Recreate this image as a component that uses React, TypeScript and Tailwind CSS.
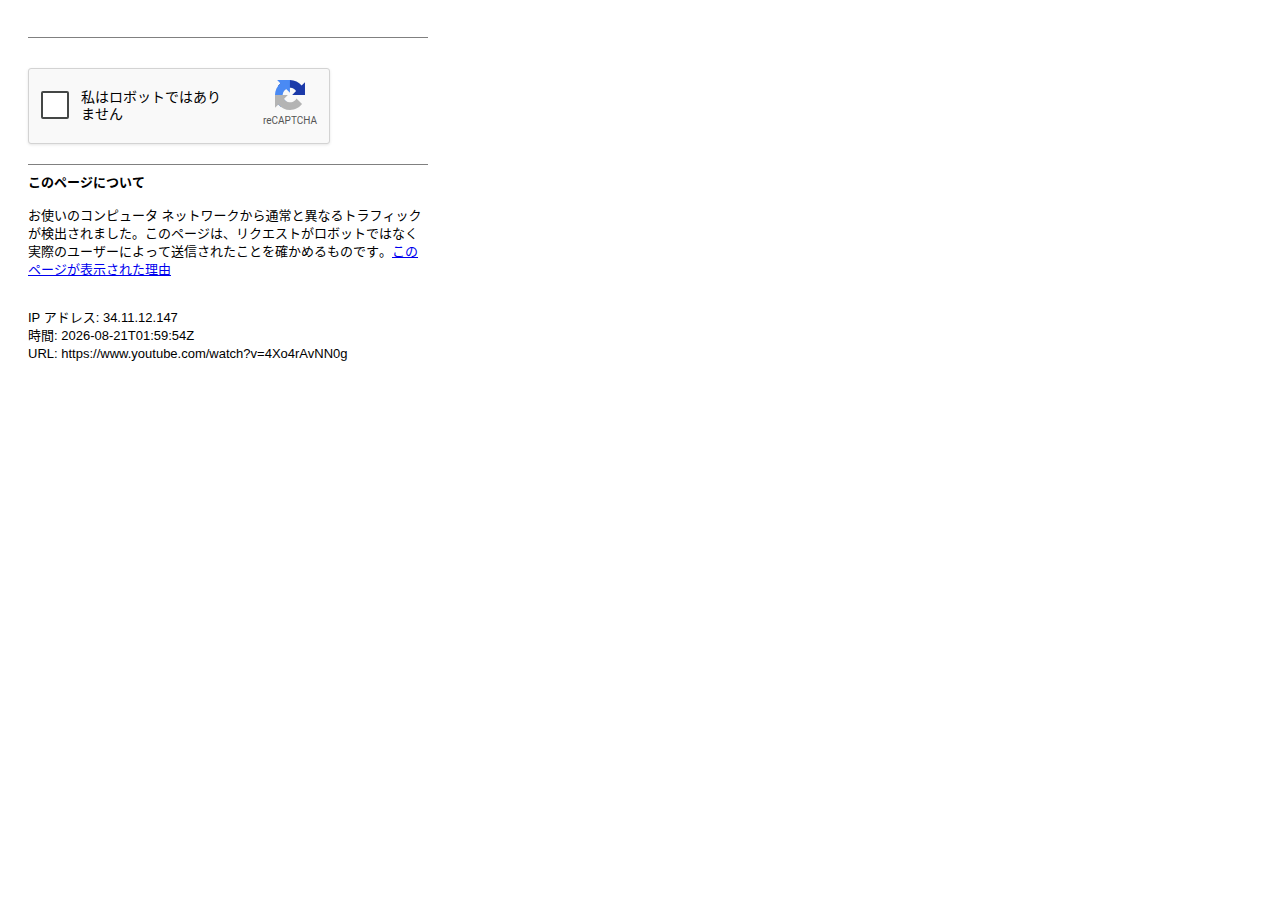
import React from 'react';

const requestInfo = [
  { label: 'IP アドレス', value: '34.11.12.147' },
  { label: '時間', value: '2026-08-21T01:59:54Z' },
  { label: 'URL', value: 'https://www.youtube.com/watch?v=4Xo4rAvNN0g' }
];

// one arrow of the logo, the others are the same shape turned
const arrow =
  'M64 31.955c-.001-.46-.012-.918-.032-1.373V4.6l-7.183 7.183C50.868 4.587 41.922 0 31.906 0 21.48 0 12.217 4.967 6.372 12.659l11.775 11.898c1.154-2.134 2.792-3.966 4.76-5.344 2.05-1.6 4.952-2.906 8.999-2.906.489 0 .866.057 1.143.165 5.014.396 9.36 3.163 11.92 7.178l-8.335 8.335c10.557-.041 22.483-.066 27.366-.03z';

function RecaptchaLogo() {
  return (
    <svg viewBox="0 0 64 64" className="h-[30px] w-[30px]" aria-hidden="true">
      <path d={arrow} fill="#1c3aa9" />
      <path d={arrow} fill="#4a8af4" transform="rotate(-90 32 32)" />
      <path d={arrow} fill="#b4b4b4" transform="rotate(180 32 32)" />
    </svg>
  );
}

function RecaptchaBox() {
  return (
    <div className="flex h-[76px] w-[302px] items-start justify-between rounded-[3px] border border-[#d3d3d3] bg-[#f9f9f9] px-3 shadow-[0_1px_3px_rgba(0,0,0,0.1)]">
      <div className="flex items-start gap-3">
        <input
          id="robot"
          type="checkbox"
          className="mt-[22px] h-7 w-7 appearance-none rounded-xs border-2 border-[#444746] bg-white checked:bg-blue-500"
        />
        <label
          htmlFor="robot"
          className="mt-5 w-[152px] font-[Roboto,'Noto_Sans_CJK_JP',sans-serif] text-sm leading-[17px] text-black [font-kerning:none]"
        >
          私はロボットではありません
        </label>
      </div>
      <div className="flex flex-col items-center pt-[11px]">
        <RecaptchaLogo />
        <span className="mt-[5px] font-[Roboto,sans-serif] text-[10px] leading-3 text-[#555555]">
          reCAPTCHA
        </span>
      </div>
    </div>
  );
}

export default function App() {
  return (
    <main
      lang="ja"
      className="max-w-[428px] pt-[37px] pl-7 font-['Liberation_Sans','Noto_Sans_CJK_JP',sans-serif] text-[13px] leading-[18px] text-black"
    >
      <hr className="border-[#808080]" />
      <form className="pt-[30px] pb-5">
        <RecaptchaBox />
      </form>
      <hr className="border-[#808080]" />

      {/* このページについて */}
      <section className="pt-[9px] [font-kerning:none]">
        <h1 className="font-bold">このページについて</h1>
        <p className="mt-[15px]">
          お使いのコンピュータ ネットワークから通常と異なるトラフィックが検出されました。このページは、リクエストがロボットではなく実際のユーザーによって送信されたことを確かめるものです。
          <a href="#infoDiv" className="text-[#0000ee] underline">
            このページが表示された理由
          </a>
        </p>
      </section>

      <div className="mt-[30px]">
        {requestInfo.map(info => (
          <p key={info.label}>
            {info.label}: {info.value}
          </p>
        ))}
      </div>
    </main>
  );
}
